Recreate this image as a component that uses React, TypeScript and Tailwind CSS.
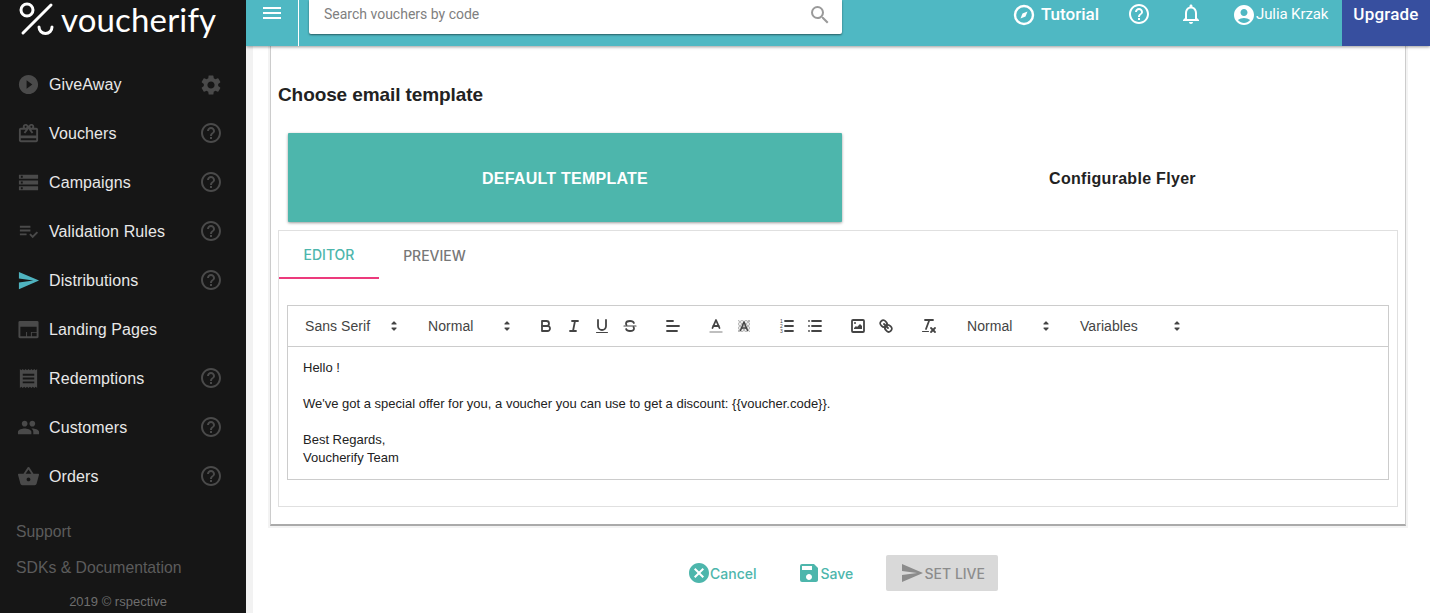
import React from 'react';
import {
  MdPlayCircleFilled,
  MdSettings,
  MdHelpOutline,
  MdCardGiftcard,
  MdStorage,
  MdPlaylistAddCheck,
  MdSend,
  MdReceipt,
  MdPeople,
  MdShoppingBasket,
  MdMenu,
  MdSearch,
  MdNotificationsNone,
  MdAccountCircle,
  MdCancel,
  MdSave,
} from 'react-icons/md';

const LandingIcon = ({ size, className }: { size: number; className?: string }) => (
  <svg width={size} height={size} viewBox="0 0 24 24" className={className} fill="currentColor" fillRule="evenodd">
    <path d="M3 3h18a1.500 1.500 0 0 1 1.500 1.500v15A1.500 1.500 0 0 1 21 21H3a1.500 1.500 0 0 1-1.500-1.500v-15A1.500 1.500 0 0 1 3 3zM3.500 9v10h11v-4.500h-4V19h-1v-4.500h11V9zM15.500 15.500V19h5v-3.500z" />
  </svg>
);

const navItems = [
  { label: 'GiveAway', icon: MdPlayCircleFilled, side: 'gear' },
  { label: 'Vouchers', icon: MdCardGiftcard, side: 'help' },
  { label: 'Campaigns', icon: MdStorage, side: 'help' },
  { label: 'Validation Rules', icon: MdPlaylistAddCheck, side: 'help' },
  { label: 'Distributions', icon: MdSend, side: 'help', active: true },
  { label: 'Landing Pages', icon: LandingIcon, side: 'none' },
  { label: 'Redemptions', icon: MdReceipt, side: 'help' },
  { label: 'Customers', icon: MdPeople, side: 'help' },
  { label: 'Orders', icon: MdShoppingBasket, side: 'help' },
];

const Sidebar = () => (
  <aside className="w-[246px] h-full shrink-0 bg-[#161616] flex flex-col font-['Liberation_Sans',sans-serif] z-20">
    <div className="h-[60px] shrink-0 pl-[19px] flex items-start">
      <svg width="36" height="36" viewBox="0 0 36 36" fill="none" stroke="white" strokeWidth="3" strokeLinecap="round" className="mt-[1px]">
        <circle cx="8" cy="9" r="6" />
        <line x1="4" y1="32" x2="32" y2="4" />
        <path d="M20 26 a6.500 6.500 0 0 0 13 0" />
      </svg>
      <span className="ml-[6px] mt-[1px] text-[33px] tracking-[0.15px] leading-[36px] font-['Lato',sans-serif] font-normal text-white">voucherify</span>
    </div>
    {navItems.map((item) => {
      const Icon = item.icon;
      return (
        <div key={item.label} className="h-[49px] shrink-0 pl-[17px] pr-[23px] flex items-center">
          <Icon size={23} className={item.active ? 'text-[#4fb3bf]' : 'text-[#4a4a4a]'} />
          <span className="ml-[9px] flex-1 text-[16px] tracking-[0.1px] text-[#e8e8e8]">{item.label}</span>
          {item.side === 'help' && <MdHelpOutline size={24} className="text-[#4a4a4a] mt-[-1px]" />}
          {item.side === 'gear' && <MdSettings size={24} className="text-[#4a4a4a]" />}
        </div>
      );
    })}
    <div className="pl-[16px] mt-[13px] text-[15.75px] leading-[35px] text-[#5c5c5c]">
      <div>Support</div>
      <div className="mt-[1px]">SDKs &amp; Documentation</div>
    </div>
    <div className="text-center text-[13px] text-[#6e6e6e] mt-[7px] pr-[10px]">2019 © rspective</div>
  </aside>
);

const Header = () => (
  <header className="h-[46px] shrink-0 bg-[#4fb8c3] flex items-stretch shadow-[0_1px_3px_rgba(0,0,0,0.4)] z-10 font-['Roboto',sans-serif] text-white">
    <div className="w-[53px] border-r border-white flex items-start justify-center pt-[1px]">
      <MdMenu size={24} />
    </div>
    <div className="ml-[10px] w-[533px] h-[34px] bg-white rounded-b-[2px] shadow-[0_1px_2px_rgba(0,0,0,0.5)] flex items-center pl-[15px] pr-[10px]">
      <span className="flex-1 text-[14px] text-[#808080] mt-[-6px]">Search vouchers by code</span>
      <MdSearch size={24} className="text-[#9a9a9a] mt-[-5px]" />
    </div>
    <div className="flex-1 flex items-start justify-end pt-[4px]">
      <svg width="22" height="22" viewBox="0 0 22 22" fill="none" stroke="white" strokeWidth="2.400">
        <circle cx="11" cy="11" r="9" />
        <path d="M14.500 7.500 L12.500 12.500 L7.500 14.500 L9.500 9.500 Z" fill="white" stroke="none" />
      </svg>
      <span className="ml-[6px] text-[17px] leading-[20px] font-medium">Tutorial</span>
      <MdHelpOutline size={24} className="ml-[28px] mt-[-2px]" />
      <MdNotificationsNone size={24} className="ml-[28px] mt-[-2px]" />
      <MdAccountCircle size={24} className="ml-[29px] mt-[-1px]" />
      <span className="text-[15px] tracking-[-0.1px] leading-[21px] w-[86px]">Julia Krzak</span>
    </div>
    <div className="w-[88px] bg-[#374f9f] flex items-start justify-center pt-[4px] text-[17px] tracking-[0.2px] leading-[20px] font-medium">Upgrade</div>
  </header>
);

const iconClass = 'ml-[2px] fill-none stroke-[#444] stroke-[1.8] [stroke-linecap:round] [stroke-linejoin:round]';

const QlIcon = ({ children }: { children: React.ReactNode }) => (
  <div className="w-[28px] h-[24px] flex items-center justify-center">
    <svg width="18" height="18" viewBox="0 0 18 18" className={iconClass}>{children}</svg>
  </div>
);

const Picker = ({ label, width }: { label: string; width: string }) => (
  <div className={`${width} h-[24px] flex items-center justify-between pl-[10px] text-[14px] tracking-[0.05px] text-[#444]`}>
    <span>{label}</span>
    <svg width="18" height="18" viewBox="0 0 18 18" className="fill-[#444] stroke-[#444] stroke-[1.2] [stroke-linejoin:round]">
      <polygon points="7 11 9 13 11 11 7 11" />
      <polygon points="7 7 9 5 11 7 7 7" />
    </svg>
  </div>
);

const Toolbar = () => (
  <div className="h-[41px] border-b border-[#ccc] pl-[7px] flex items-center gap-[15px] font-['Liberation_Sans',sans-serif]">
    <Picker label="Sans Serif" width="w-[108px]" />
    <Picker label="Normal" width="w-[98px]" />
    <div className="flex">
      <QlIcon>
        <path d="M5,4H9.500A2.500,2.500,0,0,1,12,6.500v0A2.500,2.500,0,0,1,9.500,9H5V4Z" />
        <path d="M5,9h5.500A2.500,2.500,0,0,1,13,11.500v0A2.500,2.500,0,0,1,10.500,14H5V9Z" />
      </QlIcon>
      <QlIcon>
        <line x1="7" x2="13" y1="4" y2="4" />
        <line x1="5" x2="11" y1="14" y2="14" />
        <line x1="8" x2="10" y1="14" y2="4" />
      </QlIcon>
      <QlIcon>
        <path d="M5,3V9a4,4,0,0,0,4,4H9a4,4,0,0,0,4-4V3" />
        <line x1="3.500" x2="14.500" y1="15.500" y2="15.500" strokeWidth="1" />
      </QlIcon>
      <QlIcon>
        <line x1="3" x2="15" y1="9" y2="9" strokeWidth="1.200" />
        <path d="M12.900,6C12.500,4.800,11,4,9,4,6.800,4,5,5.100,5,6.500c0,.6.2,1.100.5,1.500" />
        <path d="M5.100,12C5.500,13.200,7,14,9,14c2.200,0,4-1.100,4-2.500,0-.6-.2-1.100-.5-1.500" />
      </QlIcon>
    </div>
    <QlIcon>
      <line x1="3" x2="15" y1="9" y2="9" />
      <line x1="3" x2="13" y1="14" y2="14" />
      <line x1="3" x2="9" y1="4" y2="4" />
    </QlIcon>
    <div className="flex">
      <QlIcon>
        <line x1="3" x2="15" y1="15" y2="15" stroke="#aaa" strokeWidth="1.400" />
        <polyline points="5.500 11 9 3 12.500 11" />
        <line x1="11.600" x2="6.400" y1="9" y2="9" />
      </QlIcon>
      <QlIcon>
        <path d="M3 3h12v12h-12z" stroke="none" fill="#bbb" />
        <path d="M3 5L5 3M3 9L9 3M3 13L13 3M5 15L15 5M9 15L15 9M13 15L15 13M5 3L15 13M3 5L13 15M9 3L15 9M3 9L9 15" stroke="#fff" strokeWidth="0.700" />
        <polyline points="5.500 13.500 9 5 12.500 13.500" strokeWidth="1.500" />
        <line x1="11.600" x2="6.400" y1="11" y2="11" strokeWidth="1.500" />
      </QlIcon>
    </div>
    <div className="flex">
      <QlIcon>
        <line x1="7" x2="15" y1="4" y2="4" />
        <line x1="7" x2="15" y1="9" y2="9" />
        <line x1="7" x2="15" y1="14" y2="14" />
        <text x="2" y="6" fontSize="5" stroke="none" fill="#444">1</text>
        <text x="2" y="11" fontSize="5" stroke="none" fill="#444">2</text>
        <text x="2" y="16" fontSize="5" stroke="none" fill="#444">3</text>
      </QlIcon>
      <QlIcon>
        <line x1="6" x2="15" y1="4" y2="4" />
        <line x1="6" x2="15" y1="9" y2="9" />
        <line x1="6" x2="15" y1="14" y2="14" />
        <line x1="3" x2="3" y1="4" y2="4" />
        <line x1="3" x2="3" y1="9" y2="9" />
        <line x1="3" x2="3" y1="14" y2="14" />
      </QlIcon>
    </div>
    <div className="flex">
      <QlIcon>
        <rect x="3" y="3" width="12" height="12" rx="1" />
        <circle cx="6" cy="6" r="1" fill="#444" stroke="none" />
        <polyline points="5 12 5 11 7 9 8 10 11 7 13 9 13 12 5 12" fill="#444" stroke="none" />
      </QlIcon>
      <QlIcon>
        <line x1="7" x2="11" y1="7" y2="11" />
        <path d="M8.900,4.577a3.476,3.476,0,0,1,.36,4.679A3.476,3.476,0,0,1,4.577,8.900C3.185,7.500,2.035,6.400,4.217,4.217S7.500,3.185,8.900,4.577Z" />
        <path d="M13.423,9.100a3.476,3.476,0,0,0-4.679-.36,3.476,3.476,0,0,0,.36,4.679c1.392,1.392,2.500,2.542,4.679.36S14.815,10.500,13.423,9.100Z" />
      </QlIcon>
    </div>
    <QlIcon>
      <line x1="5" x2="13" y1="3" y2="3" />
      <line x1="6" x2="9.350" y1="12" y2="3" />
      <line x1="11" x2="15" y1="11" y2="15" />
      <line x1="15" x2="11" y1="11" y2="15" />
      <line x1="2.500" x2="8.500" y1="14.500" y2="14.500" strokeWidth="1" />
    </QlIcon>
    <Picker label="Normal" width="w-[98px]" />
    <Picker label="Variables" width="w-[116px]" />
  </div>
);

const Editor = () => (
  <div className="mx-[8px] border border-[#ccc] h-[175px] mt-[26px]">
    <Toolbar />
    <div className="pl-[15px] pt-[12px] text-[13px] leading-[18px] text-[#222] font-['Liberation_Sans',sans-serif]">
      <p>Hello !</p>
      <p className="mt-[18px]">We've got a special offer for you, a voucher you can use to get a discount: {'{{voucher.code}}'}.</p>
      <p className="mt-[18px]">Best Regards,</p>
      <p>Voucherify Team</p>
    </div>
  </div>
);

const Card = () => (
  <section className="ml-[17px] w-[1136px] h-[480px] shrink-0 bg-white border-x border-[#ccc] border-b-2 border-b-[#aaa] shadow-[0_0_0_2px_#f3f3f3] pt-[37px] pl-[7px] pr-[7px]">
    <h2 className="text-[19px] tracking-[-0.1px] leading-[24px] font-bold text-[#222] font-['Liberation_Sans',sans-serif]">Choose email template</h2>
    <div className="flex mt-[26px] ml-[10px] mr-[-5px] h-[89px] font-['Liberation_Sans',sans-serif]">
      <div className="w-[554px] bg-[#4db6ac] rounded-[1px] shadow-[0_1px_3px_rgba(0,0,0,0.4)] flex items-center justify-center pt-[2px] text-[16px] font-bold tracking-[0.25px] text-white">DEFAULT TEMPLATE</div>
      <div className="flex-1 flex items-center justify-center pt-[2px] text-[16px] font-bold tracking-[0.3px] text-[#222]">Configurable Flyer</div>
    </div>
    <div className="mt-[8px] h-[277px] w-[1120px] border border-[#e0e0e0]">
      <div className="flex h-[48px] text-[14px] font-['Inter',sans-serif] font-medium">
        <div className="w-[100px] flex items-center justify-center pt-[1px] text-[#4db6ac] border-b-2 border-[#ec3a7c]">EDITOR</div>
        <div className="w-[111px] flex items-center justify-center pt-[1px] text-[#777]">PREVIEW</div>
      </div>
      <Editor />
    </div>
  </section>
);

const Actions = () => (
  <div className="mt-[29px] flex items-center font-['Inter',sans-serif] font-medium text-[14px] text-[#4db6ac] ml-[434px]">
    <MdCancel size={24} />
    <span className="ml-[-1px]">Cancel</span>
    <MdSave size={24} className="ml-[41px]" />
    <span className="ml-[-1px]">Save</span>
    <div className="ml-[33px] w-[112px] h-[36px] rounded-[2px] bg-[#d9d9d9] text-[#8c8c8c] flex items-center justify-center gap-[1px]">
      <MdSend size={24} />
      <span>SET LIVE</span>
    </div>
  </div>
);

const App: React.FC = () => {
  return (
    <div className="h-screen w-screen overflow-hidden flex bg-white">
      <Sidebar />
      <main className="flex-1 flex flex-col min-w-0">
        <Header />
        <div className="flex-1 border-l-[7px] border-[#f2f2f2]">
          <Card />
          <Actions />
        </div>
      </main>
    </div>
  );
};

export default App;
